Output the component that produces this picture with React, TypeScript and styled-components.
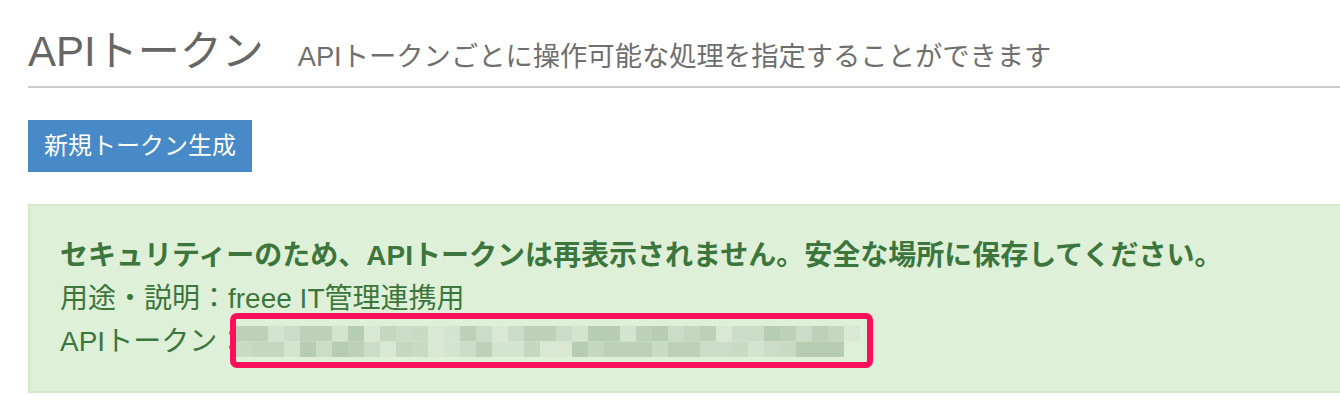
import styled, { createGlobalStyle } from 'styled-components';

const GlobalStyle = createGlobalStyle`
  html, body {
    margin: 0;
    padding: 0;
    overflow: hidden;
    background: #ffffff;
  }
  body {
    font-family: "Liberation Sans", "Noto Sans CJK JP", sans-serif;
  }
`;

const Page = styled.main`
  width: 1360px;
  padding: 27px 0 0 28px;
  box-sizing: border-box;
`;

const Header = styled.header`
  display: flex;
  align-items: baseline;
  gap: 34px;
  padding-bottom: 9px;
  border-bottom: 2px solid #cccccc;
`;

const Title = styled.h1`
  margin: 0;
  font-size: 42px;
  font-weight: 400;
  line-height: 50px;
  color: #666666;
`;

const Subtitle = styled.span`
  font-size: 27.3px;
  color: #6f6f6f;
`;

const PrimaryButton = styled.button`
  display: block;
  margin-top: 32px;
  padding: 9px 16px;
  border: none;
  border-radius: 0;
  background: #4889c7;
  color: #ffffff;
  font-family: inherit;
  font-size: 24px;
  line-height: 34px;
  cursor: pointer;
`;

const Alert = styled.section`
  margin-top: 32px;
  padding: 28px 30px;
  border: 2px solid #d6e9c6;
  background: #dff0d8;
  color: #3c763d;
  font-size: 28px;
  line-height: 43px;
`;

const AlertLine = styled.div<{ $bold?: boolean }>`
  display: flex;
  align-items: center;
  height: 43px;
  font-weight: ${(p) => (p.$bold ? 700 : 400)};
  white-space: nowrap;
`;

const Token = styled.span`
  position: relative;
  display: block;
  width: 625px;
  height: 31px;
  margin-left: -9px;
`;

const Highlight = styled.span`
  position: absolute;
  left: -6px;
  top: -13px;
  width: 643px;
  height: 55px;
  box-sizing: border-box;
  border: 6px solid #fe0e5b;
  border-radius: 7px;
`;

const palette = ['#d4e5cf', '#cbddc6', '#c4d8bf', '#bcd1b7', '#d8e8d3', '#c8dbc3', '#b7cdb2'];

const makeBlocks = () => {
  let seed = 7;
  const next = () => {
    seed = (seed * 9301 + 49297) % 233280;
    return seed / 233280;
  };
  const rows = [39, 38];
  const blocks: { x: number; y: number; c: string }[] = [];
  rows.forEach((count, r) => {
    for (let i = 0; i < count; i++) {
      let c = palette[Math.floor(next() * palette.length)];
      if (r === 0 && i === count - 1) c = '#d9e9d4';
      blocks.push({ x: i * 16, y: r * 15.5, c });
    }
  });
  return blocks;
};

const blocks = makeBlocks();

const Mosaic = () => (
  <svg width="625" height="31" viewBox="0 0 625 31">
    {blocks.map((b, i) => (
      <rect key={i} x={b.x} y={b.y} width="16" height="15.5" fill={b.c} />
    ))}
  </svg>
);

const App = () => {
  return (
    <>
      <GlobalStyle />
      <Page>
        <Header>
          <Title>APIトークン</Title>
          <Subtitle>APIトークンごとに操作可能な処理を指定することができます</Subtitle>
        </Header>
        <PrimaryButton>新規トークン生成</PrimaryButton>
        <Alert>
          <AlertLine $bold>
            セキュリティーのため、APIトークンは再表示されません。安全な場所に保存してください。
          </AlertLine>
          <AlertLine>用途・説明：freee IT管理連携用</AlertLine>
          <AlertLine>
            APIトークン：
            <Token>
              <Mosaic />
              <Highlight />
            </Token>
          </AlertLine>
        </Alert>
      </Page>
    </>
  );
};

export default App;
